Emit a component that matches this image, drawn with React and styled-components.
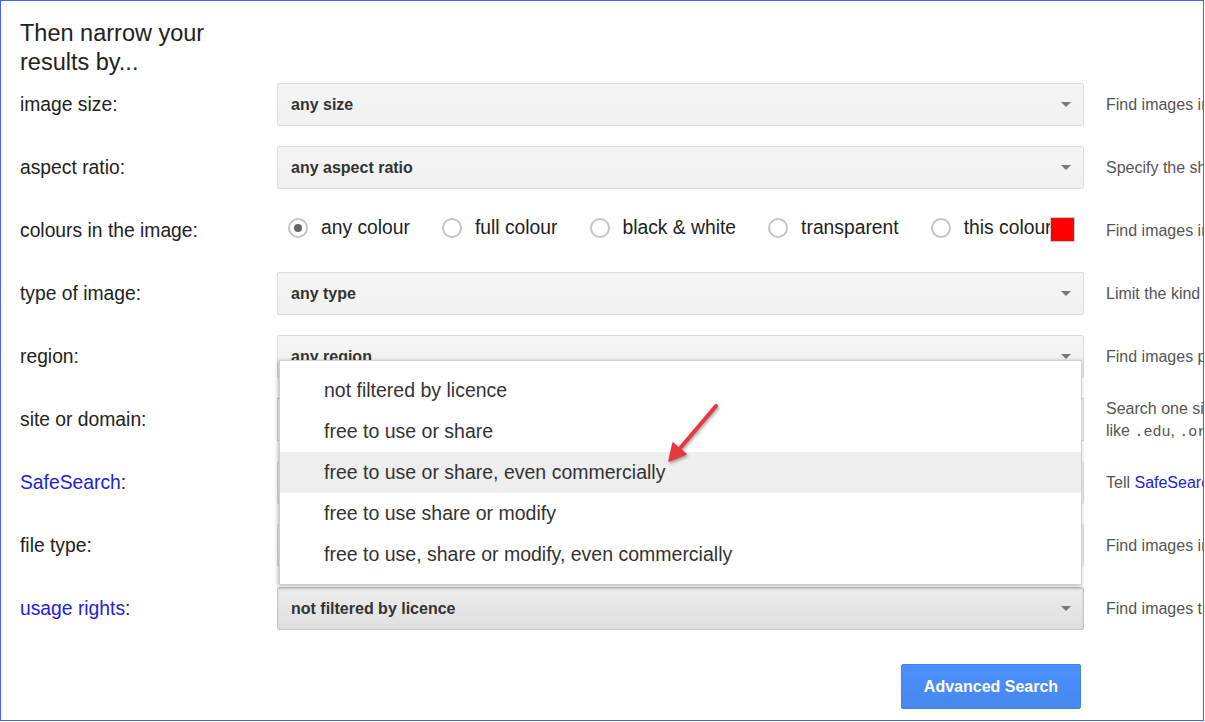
import styled, {createGlobalStyle} from 'styled-components';

const GlobalStyle = createGlobalStyle`
	html, body {
		margin: 0;
		padding: 0;
		background: #fff;
	}
	body {
		font-family: 'Liberation Sans', Arial, sans-serif;
	}
`;

const colours = ['any colour', 'full colour', 'black & white', 'transparent', 'this colour'];

const licences = [
	'not filtered by licence',
	'free to use or share',
	'free to use or share, even commercially',
	'free to use share or modify',
	'free to use, share or modify, even commercially',
];

export default function App() {
	return (
		<>
			<GlobalStyle />
			<Frame>
				<Heading>Then narrow your results by...</Heading>

				<Row>
					<Label>image size:</Label>
					<Select><SelectText>any size</SelectText><Caret /></Select>
					<Hint>Find images in any size you need</Hint>
				</Row>

				<Row>
					<Label>aspect ratio:</Label>
					<Select><SelectText>any aspect ratio</SelectText><Caret /></Select>
					<Hint>Specify the shape of images</Hint>
				</Row>

				<Row>
					<Label>colours in the image:</Label>
					<Radios>
						{colours.map((c, i) => (
							<RadioItem key={c}>
								<Radio checked={i === 0} />
								<RadioText>{c}</RadioText>
								{i === colours.length - 1 && <Swatch />}
							</RadioItem>
						))}
					</Radios>
					<Hint>Find images in your preferred colours</Hint>
				</Row>

				<Row>
					<Label>type of image:</Label>
					<Select><SelectText>any type</SelectText><Caret /></Select>
					<Hint>Limit the kind of images that you find</Hint>
				</Row>

				<Row>
					<Label>region:</Label>
					<Select><SelectText>any region</SelectText><Caret /></Select>
					<Hint>Find images published in a particular region</Hint>
				</Row>

				<Row>
					<Label>site or domain:</Label>
					<TextBox />
					<Hint two>
						Search one site (like <Mono>wikipedia.org</Mono>) or limit
						<br />
						like <Mono>.edu</Mono>, <Mono>.org</Mono> or <Mono>.gov</Mono>
					</Hint>
				</Row>

				<Row>
					<Label><Link>SafeSearch</Link>:</Label>
					<Select><span /><Caret /></Select>
					<Hint>Tell <Link>SafeSearch</Link> whether to filter sexually explicit content</Hint>
				</Row>

				<Row>
					<Label>file type:</Label>
					<Select><span /><Caret /></Select>
					<Hint>Find images in the format that you prefer</Hint>
				</Row>

				<Row>
					<Label><Link>usage rights</Link>:</Label>
					<Select open>
						<SelectText>not filtered by licence</SelectText>
						<Caret />
						<Menu>
							{licences.map((l, i) => (
								<MenuItem key={l} active={i === 2}>{l}</MenuItem>
							))}
							<Pointer viewBox="0 0 70 70">
								<line x1="56" y1="8" x2="16" y2="55" stroke="#e8383d" strokeWidth="4" strokeLinecap="round" />
								<path d="M9 63 L13 45 L26 56 Z" fill="#e8383d" strokeLinejoin="round" stroke="#e8383d" strokeWidth="1.5" />
							</Pointer>
						</Menu>
					</Select>
					<Hint>Find images that you are free to use</Hint>
				</Row>

				<Footer>
					<span />
					<SearchButton>Advanced Search</SearchButton>
				</Footer>
			</Frame>
		</>
	);
}

// #################################
// ########   STYLING    ###########
// #################################

const Frame = styled.div`
	box-sizing: border-box;
	width: 1204px;
	height: 721px;
	border: 1px solid #4466ee;
	padding: 18px 0 0 19px;
	overflow: hidden;
	color: #222;
`;

const Heading = styled.h2`
	width: 215px;
	margin: 0 0 -4px;
	font-size: 23.5px;
	font-weight: normal;
	line-height: 29px;
	color: #222;
`;

const Row = styled.div`
	display: grid;
	grid-template-columns: 257px 807px 1fr;
	align-items: center;
	height: 63px;
`;

const Label = styled.div`
	font-size: 19.3px;
	color: #222;
	white-space: nowrap;
`;

const Link = styled.span`
	color: #2121dd;
`;

const Select = styled.div`
	position: relative;
	box-sizing: border-box;
	height: 43px;
	display: flex;
	align-items: center;
	justify-content: space-between;
	padding: 0 12px 0 13px;
	border: 1px solid ${props => (props.open ? '#c6c6c6' : '#dcdcdc')};
	border-radius: 2px;
	background: ${props =>
		props.open ? 'linear-gradient(#ececec, #e0e0e0)' : 'linear-gradient(#f5f5f5, #f1f1f1)'};
	box-shadow: ${props => (props.open ? 'inset 0 1px 2px rgba(0,0,0,0.15)' : 'none')};
`;

const SelectText = styled.span`
	font-size: 16px;
	font-weight: bold;
	color: #333;
`;

const Caret = styled.span`
	width: 0;
	height: 0;
	border-left: 5px solid transparent;
	border-right: 5px solid transparent;
	border-top: 5px solid #777;
`;

const TextBox = styled.div`
	box-sizing: border-box;
	height: 43px;
	border: 1px solid #d9d9d9;
	border-top-color: #c0c0c0;
	background: #fff;
`;

const Hint = styled.div`
	padding-left: 22px;
	margin-top: ${props => (props.two ? '2px' : '0')};
	font-size: 16px;
	line-height: 20px;
	color: #555;
	white-space: nowrap;
`;

const Mono = styled.span`
	font-family: 'Liberation Mono', 'Courier New', monospace;
	font-size: 15px;
`;

const Radios = styled.div`
	display: flex;
	align-items: center;
	gap: 32px;
	padding-left: 11px;
	margin-top: -5px;
`;

const RadioItem = styled.div`
	display: flex;
	align-items: center;
`;

const Radio = styled.span`
	position: relative;
	box-sizing: border-box;
	width: 20px;
	height: 20px;
	margin-right: 13px;
	border: 2px solid #c4c4c4;
	border-radius: 50%;
	background: #fff;

	&::after {
		content: '';
		display: ${props => (props.checked ? 'block' : 'none')};
		position: absolute;
		left: 4px;
		top: 4px;
		width: 8px;
		height: 8px;
		border-radius: 50%;
		background: #666;
	}
`;

const RadioText = styled.span`
	font-size: 19.3px;
	color: #222;
	white-space: nowrap;
`;

const Swatch = styled.span`
	box-sizing: border-box;
	width: 25px;
	height: 25px;
	margin: 3px 0 0 -2px;
	border: 1px solid #ccc;
	background: #ff0000;
`;

const Menu = styled.div`
	position: absolute;
	left: 1px;
	right: 1px;
	bottom: calc(100% + 3px);
	padding: 9px 0;
	background: #fff;
	border: 1px solid #d0d0d0;
	box-shadow: -1px 1px 4px rgba(0, 0, 0, 0.3);
	z-index: 5;
`;

const MenuItem = styled.div`
	height: 41px;
	display: flex;
	align-items: center;
	padding-left: 44px;
	font-size: 19.5px;
	color: #333;
	background: ${props => (props.active ? '#eeeeee' : 'transparent')};
`;

const Pointer = styled.svg`
	position: absolute;
	left: 380px;
	top: 37px;
	width: 70px;
	height: 70px;
	overflow: visible;
	filter: drop-shadow(1px 2px 1.5px rgba(0, 0, 0, 0.35));
`;

const Footer = styled.div`
	display: grid;
	grid-template-columns: 257px 807px 1fr;
	margin-top: 24px;
`;

const SearchButton = styled.button`
	justify-self: end;
	margin-right: 3px;
	width: 180px;
	height: 45px;
	border: 1px solid #3b82f0;
	border-radius: 2px;
	background: linear-gradient(#4d90fe, #4787ed);
	color: #fff;
	font-family: 'Liberation Sans', Arial, sans-serif;
	font-size: 16px;
	font-weight: bold;
	cursor: pointer;
`;
